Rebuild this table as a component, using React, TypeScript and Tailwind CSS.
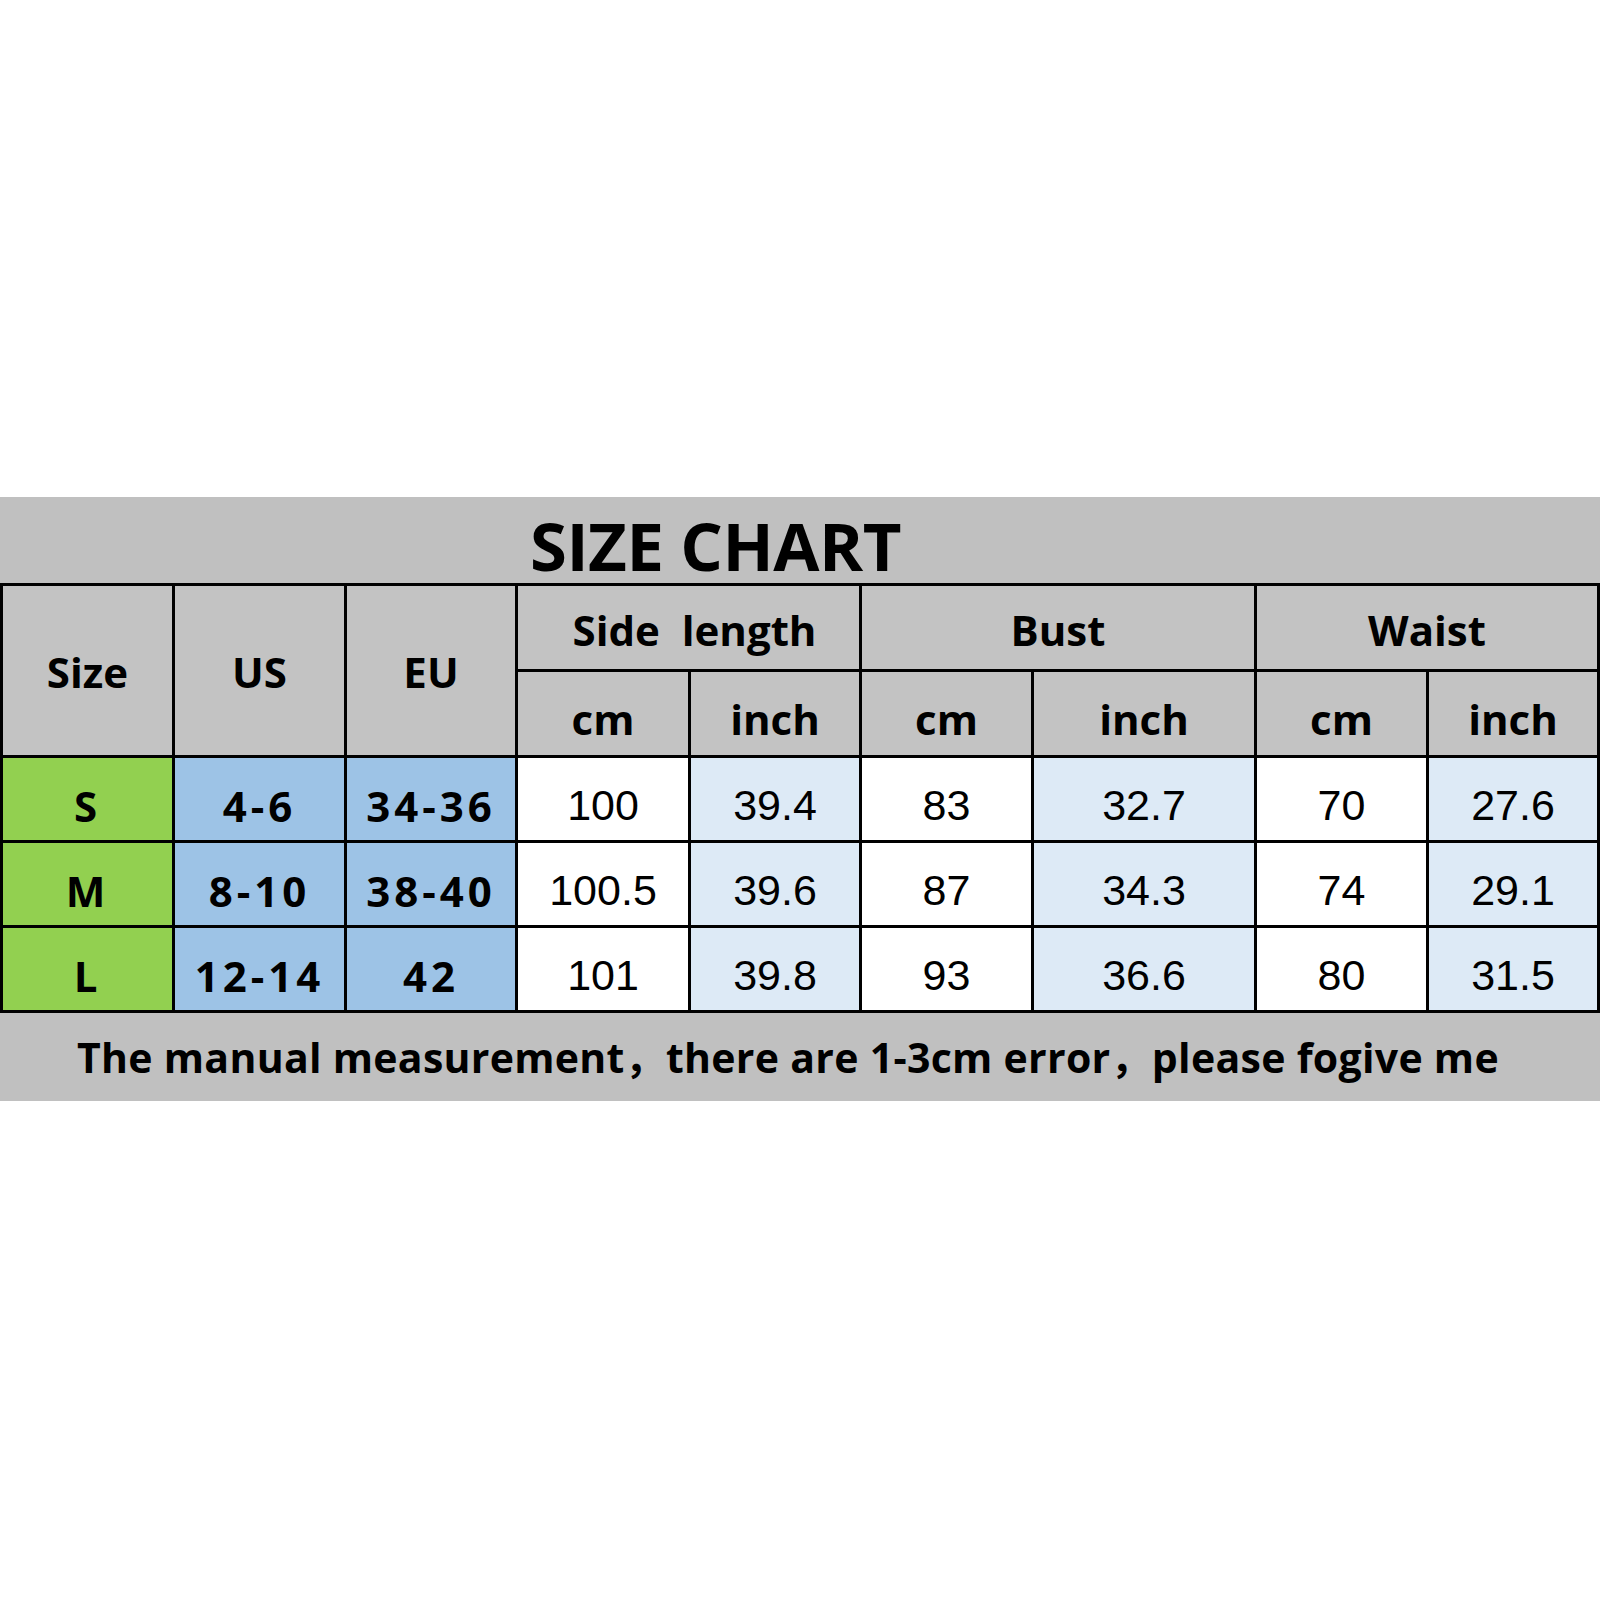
import React from "react";

type Row = {
  size: string;
  us: string;
  eu: string;
  values: string[];
};

const rows: Row[] = [
  { size: "S", us: "4-6", eu: "34-36", values: ["100", "39.4", "83", "32.7", "70", "27.6"] },
  { size: "M", us: "8-10", eu: "38-40", values: ["100.5", "39.6", "87", "34.3", "74", "29.1"] },
  { size: "L", us: "12-14", eu: "42", values: ["101", "39.8", "93", "36.6", "80", "31.5"] }
];

const head =
  "flex items-center justify-center bg-[#c3c3c3] font-['Open_Sans',sans-serif] font-bold text-[42px] leading-none text-black";
const bold =
  "flex items-center justify-center pt-[13px] font-['Open_Sans',sans-serif] font-bold text-[42px] leading-none tracking-[4px] text-black";
const num =
  "flex items-center justify-center pt-[13px] font-['Liberation_Sans',Arial,sans-serif] text-[43px] leading-none text-black";

const App = () => {
  return (
    <div className="w-[1600px] h-[1600px] bg-white flex flex-col pt-[497px]">
      <div className="flex flex-col bg-[#c0c0c0]">
        {/* title */}
        <div className="h-[86px] flex items-end pl-[530px] pb-[4px]">
          <h1 className="font-['Open_Sans',sans-serif] font-bold text-[67px] leading-none tracking-[-0.5px] text-black">
            SIZE CHART
          </h1>
        </div>

        {/* table */}
        <div className="grid grid-cols-[169px_169px_168px_170px_168px_169px_220px_169px_168px] grid-rows-[83px_83px_82px_82px_82px] gap-[3px] p-[3px] bg-black">
          <div className={`${head} row-span-2 pt-[3px]`}>Size</div>
          <div className={`${head} row-span-2 pt-[3px]`}>US</div>
          <div className={`${head} row-span-2 pt-[3px]`}>EU</div>
          <div className={`${head} col-span-2 pt-[4px] pl-[12px] whitespace-pre`}>Side  length</div>
          <div className={`${head} col-span-2 pt-[4px]`}>Bust</div>
          <div className={`${head} col-span-2 pt-[4px]`}>Waist</div>

          <div className={`${head} pt-[10px]`}>cm</div>
          <div className={`${head} pt-[10px]`}>inch</div>
          <div className={`${head} pt-[10px]`}>cm</div>
          <div className={`${head} pt-[10px]`}>inch</div>
          <div className={`${head} pt-[10px]`}>cm</div>
          <div className={`${head} pt-[10px]`}>inch</div>

          {rows.map((row) => (
            <React.Fragment key={row.size}>
              <div className={`${bold} bg-[#92d050]`}>{row.size}</div>
              <div className={`${bold} bg-[#9dc3e6]`}>{row.us}</div>
              <div className={`${bold} bg-[#9dc3e6]`}>{row.eu}</div>
              {row.values.map((v, i) => (
                <div key={i} className={`${num} ${i % 2 === 0 ? "bg-white" : "bg-[#ddeaf6]"}`}>
                  {v}
                </div>
              ))}
            </React.Fragment>
          ))}
        </div>

        {/* footer note */}
        <div className="h-[88px] flex items-center justify-center pr-[24px]">
          <p className="font-['Open_Sans','Noto_Sans_CJK_SC',sans-serif] font-bold text-[41px] leading-none tracking-[0.3px] text-black whitespace-pre">
            The manual measurement，there are 1-3cm error，please fogive me
          </p>
        </div>
      </div>
    </div>
  );
};

export default App;
